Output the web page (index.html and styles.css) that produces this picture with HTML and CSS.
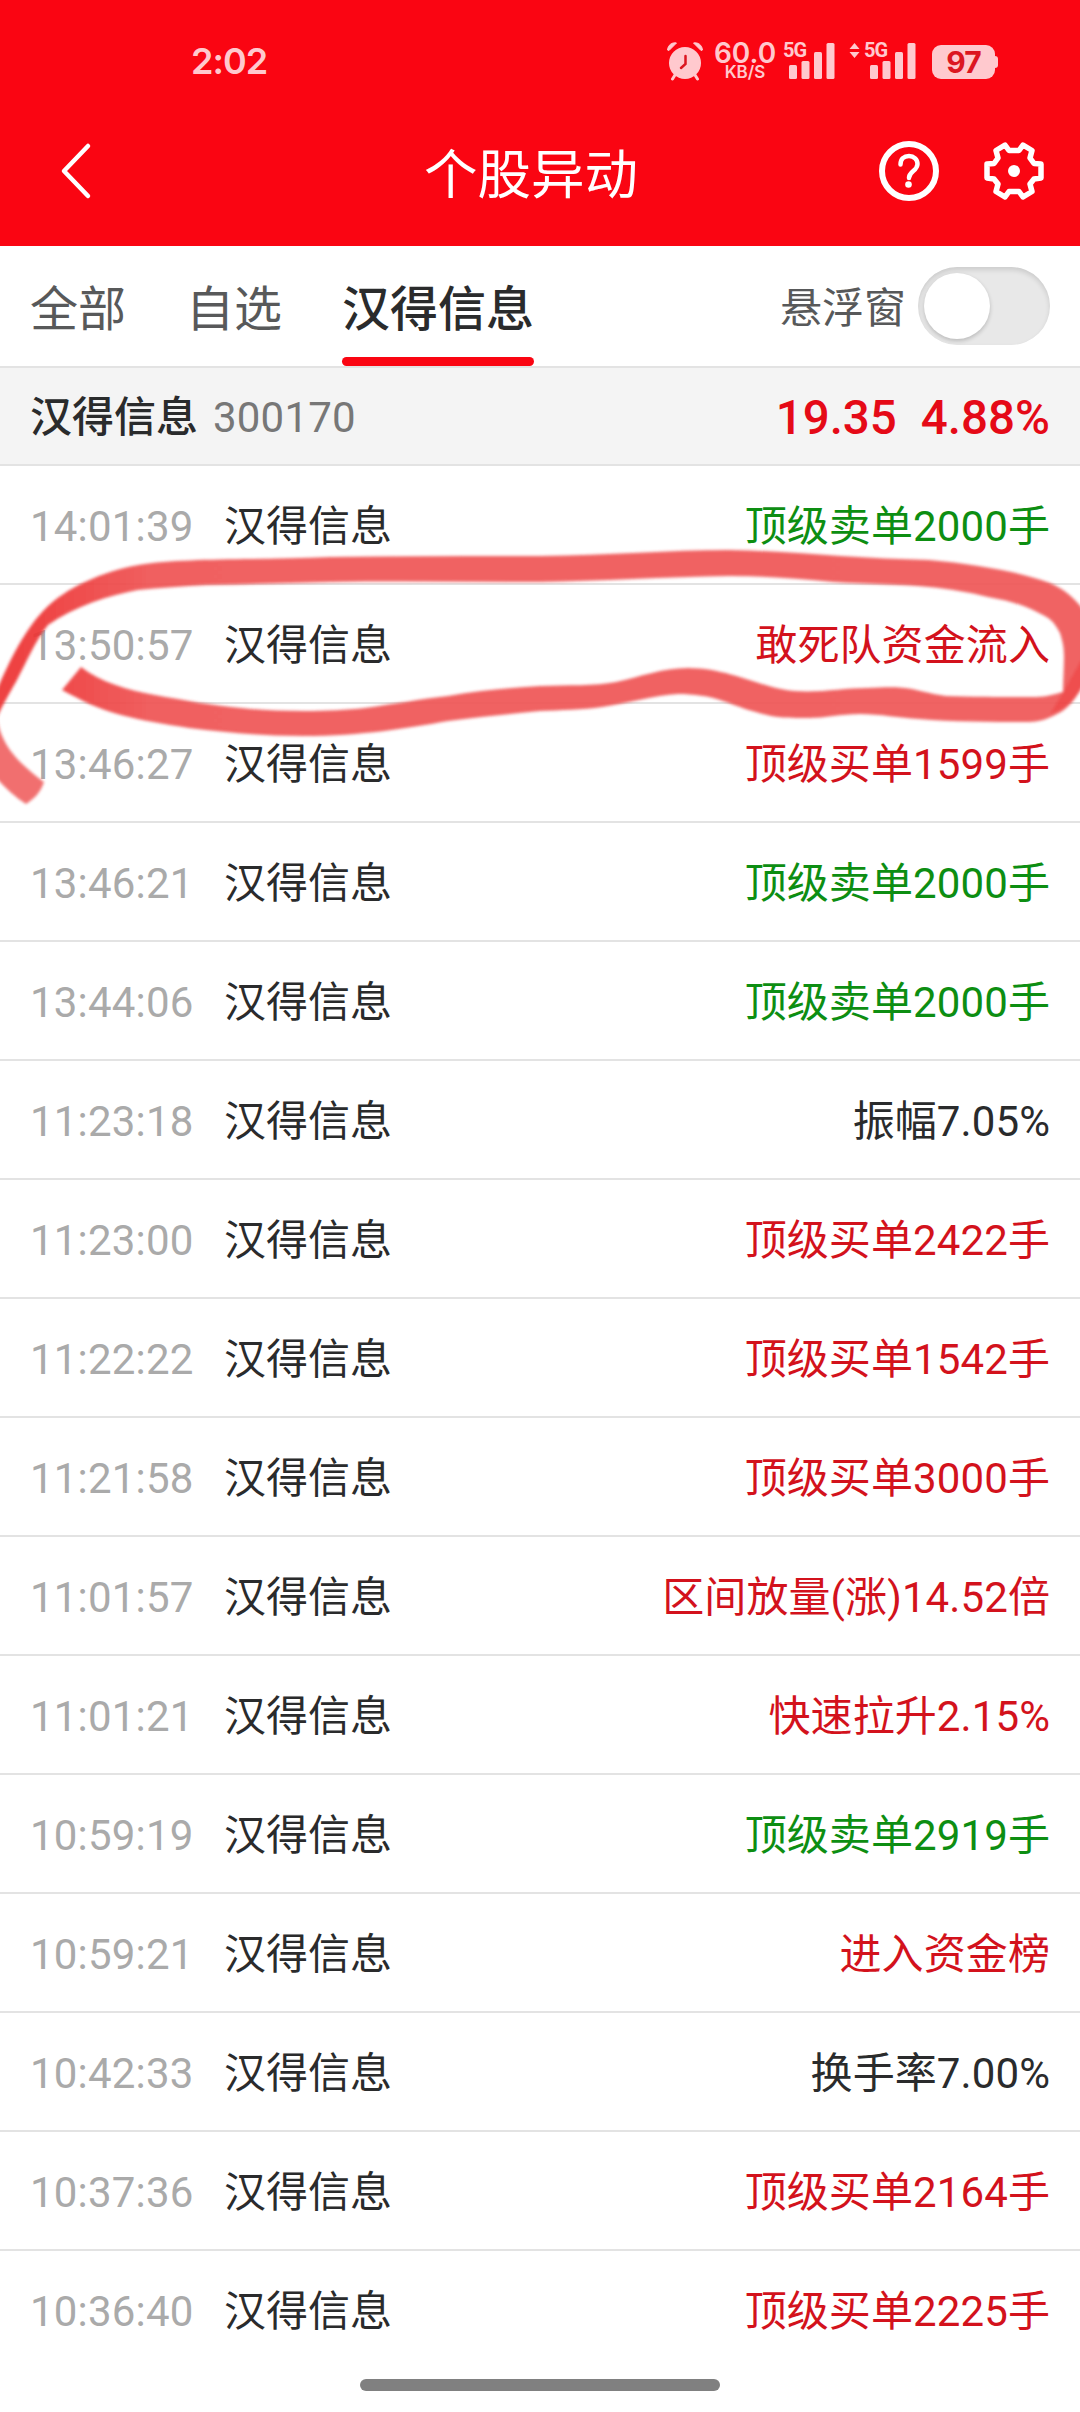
FILE: index.html
```html
<!DOCTYPE html>
<html lang="zh-CN">
  <head>
    <meta charset="UTF-8" />
    <title>个股异动</title>
    <link rel="stylesheet" href="styles.css">
  </head>
  <body>
    <div class="header">
      <div class="status">
        <div class="clock">2:02</div>
        <div class="status-icons">
          <svg class="alarm" width="38" height="40" viewBox="0 0 38 40">
            <circle cx="19" cy="22" r="16" fill="#ffc9ce" />
            <path d="M9 34l-2.500 4M29 34l2.500 4" stroke="#ffc9ce" stroke-width="3" stroke-linecap="round" />
            <path d="M1.500 9C2 4 6 1 10.500 2L3 9.500zM36.500 9C36 4 32 1 27.500 2L35 9.500z" fill="#ffc9ce" stroke="#ffc9ce" stroke-linejoin="round" />
            <path d="M19.500 15v8l-4.500 4" fill="none" stroke="#dc1620" stroke-width="2.500" stroke-linecap="round" />
          </svg>
          <div class="speed">
            <span class="speed-num">60.0</span>
            <span class="speed-unit">KB/S</span>
          </div>
          <div class="signal">
            <span class="net">5G</span>
            <svg width="46" height="37" viewBox="0 0 46 37">
              <rect x="0" y="23" width="8" height="14" rx="1.500" />
              <rect x="12.500" y="19" width="8" height="18" rx="1.500" />
              <rect x="25" y="10" width="8" height="27" rx="1.500" />
              <rect x="37.500" y="1" width="8" height="36" rx="1.500" />
            </svg>
          </div>
          <svg class="updown" width="11" height="15" viewBox="0 0 11 15">
            <path d="M5.500 0l5 6H.5zM5.500 15l5-6H.5z" />
          </svg>
          <div class="signal signal-2">
            <span class="net">5G</span>
            <svg width="46" height="37" viewBox="0 0 46 37">
              <rect x="0" y="23" width="8" height="14" rx="1.500" />
              <rect x="12.500" y="19" width="8" height="18" rx="1.500" />
              <rect x="25" y="10" width="8" height="27" rx="1.500" />
              <rect x="37.500" y="1" width="8" height="36" rx="1.500" />
            </svg>
          </div>
          <div class="battery">97</div>
          <div class="battery-tip"></div>
        </div>
      </div>
      <div class="nav">
        <svg class="back" width="32" height="58" viewBox="0 0 32 58">
          <path d="M28 4L4 29l24 25" fill="none" stroke="#fff" stroke-width="4.500" stroke-linecap="round" stroke-linejoin="round" />
        </svg>
        <div class="title">个股异动</div>
        <svg class="help" width="60" height="60" viewBox="0 0 60 60">
          <circle cx="30" cy="30" r="27" fill="none" stroke="#fff" stroke-width="6" />
          <path d="M21.500 23.500C21.500 18 25 15 30 15s8.500 3.500 8.500 8c0 7-8.500 7-8.500 14" fill="none" stroke="#fff" stroke-width="4.500" stroke-linecap="round" />
          <circle cx="29.500" cy="43.500" r="3.300" fill="#fff" />
        </svg>
        <svg class="gear" width="60" height="60" viewBox="0 0 60 60">
          <path d="M21 4L25 9.500H35L39 4L48 9.500L46 17L50 22.500L57 23V37L50 38L46 43L48 50.500L39 56L35 50.500H25L21 56L12 50.500L14 43L10 38L3 37V23L10 22.500L14 17L12 9.500z" fill="none" stroke="#fff" stroke-width="5.500" stroke-linejoin="round" />
          <circle cx="30" cy="30" r="6" fill="#fff" />
        </svg>
      </div>
    </div>

    <div class="tabs">
      <div class="tab">全部</div>
      <div class="tab">自选</div>
      <div class="tab active">汉得信息</div>
      <div class="float-label">悬浮窗</div>
      <div class="switch"><div class="knob"></div></div>
    </div>

    <div class="stock">
      <span class="stock-name">汉得信息</span>
      <span class="stock-code">300170</span>
      <span class="price">19.35</span>
      <span class="percent">4.88%</span>
    </div>

    <div class="list">
      <div class="row"><span class="time">14:01:39</span><span>汉得信息</span><span class="event green">顶级卖单2000手</span></div>
      <div class="row"><span class="time">13:50:57</span><span>汉得信息</span><span class="event red">敢死队资金流入</span></div>
      <div class="row"><span class="time">13:46:27</span><span>汉得信息</span><span class="event red">顶级买单1599手</span></div>
      <div class="row"><span class="time">13:46:21</span><span>汉得信息</span><span class="event green">顶级卖单2000手</span></div>
      <div class="row"><span class="time">13:44:06</span><span>汉得信息</span><span class="event green">顶级卖单2000手</span></div>
      <div class="row"><span class="time">11:23:18</span><span>汉得信息</span><span class="event">振幅7.05%</span></div>
      <div class="row"><span class="time">11:23:00</span><span>汉得信息</span><span class="event red">顶级买单2422手</span></div>
      <div class="row"><span class="time">11:22:22</span><span>汉得信息</span><span class="event red">顶级买单1542手</span></div>
      <div class="row"><span class="time">11:21:58</span><span>汉得信息</span><span class="event red">顶级买单3000手</span></div>
      <div class="row"><span class="time">11:01:57</span><span>汉得信息</span><span class="event red">区间放量(涨)14.52倍</span></div>
      <div class="row"><span class="time">11:01:21</span><span>汉得信息</span><span class="event red">快速拉升2.15%</span></div>
      <div class="row"><span class="time">10:59:19</span><span>汉得信息</span><span class="event green">顶级卖单2919手</span></div>
      <div class="row"><span class="time">10:59:21</span><span>汉得信息</span><span class="event red">进入资金榜</span></div>
      <div class="row"><span class="time">10:42:33</span><span>汉得信息</span><span class="event">换手率7.00%</span></div>
      <div class="row"><span class="time">10:37:36</span><span>汉得信息</span><span class="event red">顶级买单2164手</span></div>
      <div class="row"><span class="time">10:36:40</span><span>汉得信息</span><span class="event red">顶级买单2225手</span></div>

      <!-- marker loop around the 13:50:57 row -->
      <svg class="marker" width="1080" height="280" viewBox="0 540 1080 280">
        <defs>
          <linearGradient id="ink" gradientUnits="userSpaceOnUse" x1="0" y1="0" x2="1080" y2="0">
            <stop offset="0" stop-color="#ed3030" />
            <stop offset="0.040" stop-color="#ed3636" />
            <stop offset="0.140" stop-color="#ef5353" />
            <stop offset="1" stop-color="#ef5656" />
          </linearGradient>
          <filter id="soft" x="-2%" y="-5%" width="104%" height="110%">
            <feGaussianBlur stdDeviation="1.400" />
          </filter>
        </defs>
        <g filter="url(#soft)" opacity="0.920">
          <path fill="url(#ink)" d="M-4 692C10 660 25 628 48 606C72 584 110 569 145 564C190 558 260 560 331 557C400 556 470 556 540 556C610 555 670 550 729 550C790 551 860 559 929 560C975 564 1020 572 1050 583C1064 589 1076 599 1084 611L1084 684C1076 698 1069 708 1059 713C1050 718 1040 722 1029 722C1000 722 955 722 919 719C900 718 880 714 860 714C840 714 825 718 809 718C793 718 778 718 767 715C750 711 737 706 723 701C709 696 694 694 678 694C655 695 625 704 602 707C583 710 560 710 540 711C510 714 478 717 448 721C408 728 362 736 303 736C260 736 222 732 189 728C165 724 143 721 121 715C97 709 79 699 62 690L81 667C100 682 128 690 155 695C183 700 215 706 241 708C280 712 330 712 365 708C395 704 420 699 448 696C478 690 510 688 540 686C568 685 595 686 616 682C640 677 662 668 688 668C724 668 752 683 781 689C810 695 840 688 867 688C890 687 900 687 912 689C930 693 938 695 946 696C975 697 1010 697 1036 697C1046 697 1055 694 1063 692C1063 680 1064 669 1064 657C1064 645 1062 640 1060 633C1053 620 1049 618 1039 613C1022 604 1005 600 988 597C968 592 950 589 929 587C900 584 866 584 833 582C800 579 765 576 729 576C665 577 600 581 540 582C470 582 400 581 331 582C290 583 250 584 207 585C183 586 160 588 138 590C110 595 75 606 48 625C35 641 27 661 17 680C11 691 5 700 -4 720Z" />
          <path fill="#f06363" d="M-4 712C0 742 12 758 44 782C41 792 34 799 26 804C15 797 8 790 -4 778Z" />
          <path fill="#ed3333" opacity="0.600" d="M1063 692L1084 655V684C1076 698 1069 708 1050 714Z" />
        </g>
      </svg>
    </div>
    <div class="home-bar"></div>
  </body>
</html>
```
FILE: styles.css
```css
* {
  box-sizing: border-box;
}

body {
  margin: 0;
  width: 1080px;
  height: 2412px;
  overflow: hidden;
  background-color: #fff;
  color: #2a2b2c;
  font-family: Roboto, "Noto Sans CJK SC", sans-serif;
  font-size: 42px;
}

svg {
  display: block;
  flex: none;
}

.header {
  height: 246px;
  background-color: #fa0512;
  color: #fff;
}

.status {
  display: flex;
  align-items: flex-start;
  justify-content: space-between;
  height: 96px;
  padding: 40px 82px 0 191px;
  color: #ffc9ce;
  font-family: Inter, sans-serif;
}

.clock {
  font-size: 36px;
  font-weight: 600;
  letter-spacing: -1px;
  line-height: 42px;
}

.status-icons {
  display: flex;
}

.alarm {
  margin-top: 1px;
}

.speed {
  display: flex;
  flex-direction: column;
  align-items: center;
  width: 62px;
  margin-left: 10px;
  font-weight: 600;
}

.speed-num {
  font-size: 28px;
  line-height: 26px;
}

.speed-unit {
  font-size: 17px;
  line-height: 13px;
}

.signal {
  display: flex;
  align-items: flex-start;
  margin-left: 7px;
  padding-top: 2px;
  fill: #ffc9ce;
}

.signal svg {
  margin-left: -17px;
}

.signal-2 {
  margin-left: 4px;
}

.updown {
  margin-top: 3px;
  margin-left: 14px;
  fill: #ffc9ce;
}

.net {
  width: 23px;
  font-family: Roboto, sans-serif;
  font-size: 20px;
  font-weight: 700;
  letter-spacing: -1px;
  line-height: 17px;
}

.battery {
  width: 63px;
  height: 34px;
  margin-top: 5px;
  margin-left: 16px;
  border-radius: 9px;
  background-color: #ffc9ce;
  color: #dc1620;
  font-size: 30px;
  font-weight: 700;
  letter-spacing: -1px;
  line-height: 35px;
  text-align: center;
}

.battery-tip {
  width: 3px;
  height: 12px;
  margin-top: 16px;
  border-radius: 0 3px 3px 0;
  background-color: #ffc9ce;
}

.nav {
  display: flex;
  align-items: center;
  height: 150px;
  padding: 0 36px 0 60px;
}

.title {
  margin-left: 332px;
  margin-top: 9px;
  font-size: 53.500px;
  line-height: 80px;
}

.help {
  margin-left: auto;
}

.gear {
  margin-left: 45px;
}

.tabs {
  display: flex;
  align-items: center;
  height: 122px;
  padding: 0 30px;
  border-bottom: 2px solid #e3e3e3;
  color: #58595a;
}

.tab {
  height: 120px;
  margin-right: 60px;
  font-size: 48px;
  line-height: 127px;
}

.tab.active {
  position: relative;
  color: #2a2b2c;
  font-weight: 500;
}

.tab.active::after {
  content: "";
  position: absolute;
  left: 0;
  bottom: 0;
  width: 100%;
  height: 9px;
  border-radius: 5px;
  background-color: #fa0512;
}

.float-label {
  height: 120px;
  margin-left: auto;
  margin-right: 12px;
  line-height: 125px;
}

.switch {
  width: 132px;
  height: 78px;
  padding: 6px;
  border-radius: 39px;
  background-color: #e8e8e8;
  box-shadow: inset 0 3px 5px rgba(0, 0, 0, .12);
}

.knob {
  width: 66px;
  height: 66px;
  border-radius: 50%;
  background-color: #fff;
  box-shadow: 0 2px 4px rgba(0, 0, 0, .2);
}

.stock {
  display: flex;
  height: 98px;
  padding: 0 30px;
  border-bottom: 2px solid #e3e3e3;
  background-color: #f4f4f4;
  line-height: 100px;
}

.stock-name {
  font-weight: 500;
}

.stock-code {
  margin-left: 15px;
  color: #777;
  letter-spacing: .2px;
}

.price,
.percent {
  color: #e50a17;
  font-size: 47.500px;
  font-weight: 500;
}

.price {
  margin-left: auto;
}

.percent {
  margin-left: 24px;
}

.list {
  position: relative;
}

.row {
  display: flex;
  height: 119px;
  padding: 0 30px;
  border-bottom: 2px solid #e3e3e3;
  line-height: 122px;
}

.row:nth-child(16) {
  border-bottom: none;
}

.time {
  width: 194px;
  color: #aaa;
  letter-spacing: .2px;
}

.event {
  margin-left: auto;
  letter-spacing: .1px;
}

.red {
  color: #d3121c;
}

.green {
  color: #0d8e12;
}

.marker {
  position: absolute;
  left: 0;
  top: 74px;
}

.home-bar {
  width: 360px;
  height: 12px;
  margin: 9px auto 0;
  border-radius: 6px;
  background-color: #808080;
}
```
